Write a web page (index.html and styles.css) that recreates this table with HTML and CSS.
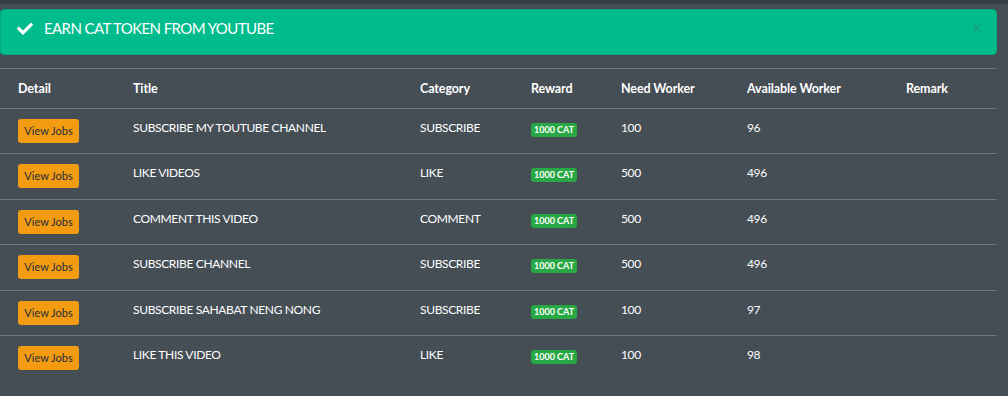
FILE: index.html
```html
<!DOCTYPE html>
<html lang="en">

<head>
    <meta charset="UTF-8">
    <meta name="viewport" content="width=device-width, initial-scale=1.0">
    <title>Earn CAT Token</title>
    <link rel="stylesheet" href="styles.css">
</head>

<body>
    <div class="topbar"></div>

    <div class="content">
        <!-- Alert -->
        <div class="alert">
            <svg class="alert-icon" width="16" height="13" viewBox="0 0 512 400">
                <path d="M173.9 391.4l-166.4-166.4c-10-10-10-26.2 0-36.2l36.2-36.2c10-10 26.2-10 36.2 0L192 264.7 432.1 24.6c10-10 26.2-10 36.2 0l36.2 36.2c10 10 10 26.2 0 36.2l-294.4 294.4c-10 10-26.2 10-36.2 0z" fill="#fff"/>
            </svg>
            <span class="alert-text">EARN CAT TOKEN FROM YOUTUBE</span>
            <span class="alert-close">&times;</span>
        </div>

        <!-- Jobs table -->
        <table class="jobs">
            <colgroup>
                <col style="width: 115px">
                <col style="width: 287px">
                <col style="width: 111px">
                <col style="width: 90px">
                <col style="width: 126px">
                <col style="width: 159px">
                <col style="width: 109px">
            </colgroup>
            <thead>
                <tr>
                    <th>Detail</th>
                    <th>Title</th>
                    <th>Category</th>
                    <th>Reward</th>
                    <th>Need Worker</th>
                    <th>Available Worker</th>
                    <th>Remark</th>
                </tr>
            </thead>
            <tbody>
                <tr>
                    <td><a href="#" class="btn-jobs">View Jobs</a></td>
                    <td>SUBSCRIBE MY TOUTUBE CHANNEL</td>
                    <td>SUBSCRIBE</td>
                    <td><span class="badge">1000 CAT</span></td>
                    <td>100</td>
                    <td>96</td>
                    <td></td>
                </tr>
                <tr>
                    <td><a href="#" class="btn-jobs">View Jobs</a></td>
                    <td>LIKE VIDEOS</td>
                    <td>LIKE</td>
                    <td><span class="badge">1000 CAT</span></td>
                    <td>500</td>
                    <td>496</td>
                    <td></td>
                </tr>
                <tr>
                    <td><a href="#" class="btn-jobs">View Jobs</a></td>
                    <td>COMMENT THIS VIDEO</td>
                    <td>COMMENT</td>
                    <td><span class="badge">1000 CAT</span></td>
                    <td>500</td>
                    <td>496</td>
                    <td></td>
                </tr>
                <tr>
                    <td><a href="#" class="btn-jobs">View Jobs</a></td>
                    <td>SUBSCRIBE CHANNEL</td>
                    <td>SUBSCRIBE</td>
                    <td><span class="badge">1000 CAT</span></td>
                    <td>500</td>
                    <td>496</td>
                    <td></td>
                </tr>
                <tr>
                    <td><a href="#" class="btn-jobs">View Jobs</a></td>
                    <td>SUBSCRIBE SAHABAT NENG NONG</td>
                    <td>SUBSCRIBE</td>
                    <td><span class="badge">1000 CAT</span></td>
                    <td>100</td>
                    <td>97</td>
                    <td></td>
                </tr>
                <tr>
                    <td><a href="#" class="btn-jobs">View Jobs</a></td>
                    <td>LIKE THIS VIDEO</td>
                    <td>LIKE</td>
                    <td><span class="badge">1000 CAT</span></td>
                    <td>100</td>
                    <td>98</td>
                    <td></td>
                </tr>
            </tbody>
        </table>
    </div>
</body>

</html>
```

FILE: styles.css
```css
body {
    font-family: 'Lato', 'Liberation Sans', sans-serif;
    background: #454d55;
    margin: 0;
    padding: 0;
    color: #fff;
}

.topbar {
    height: 4px;
    background: #383e44;
}

.content {
    width: 997px;
    padding-top: 5px;
}

.alert {
    display: flex;
    align-items: flex-start;
    height: 44px;
    box-sizing: border-box;
    height: 46px;
    padding: 8px 17px 0 16px;
    background: #00bc8c;
    border: 1px solid #00a87d;
    border-radius: 4px;
    line-height: 20px;
}

.alert-icon {
    margin-top: 4px;
    margin-right: 11px;
}

.alert-text {
    font-size: 15px;
    letter-spacing: -0.6px;
    flex: 1;
}

.alert-close {
    font-size: 18px;
    font-weight: 700;
    color: #17a27f;
    margin-right: -3px;
}

.jobs {
    width: 997px;
    margin-top: 13px;
    border-collapse: collapse;
    table-layout: fixed;
    font-size: 12px;
    line-height: 18px;
    letter-spacing: -0.35px;
}

.jobs th,
.jobs td {
    text-align: left;
    padding: 0 0 0 18px;
    border-top: 1px solid #6c757d;
}

.jobs th {
    height: 38px;
    font-size: 12.5px;
    font-weight: 700;
    letter-spacing: -0.1px;
    vertical-align: middle;
    padding-top: 1px;
}

.jobs td {
    height: 34.4px;
    padding-top: 10px;
    vertical-align: top;
}

.btn-jobs {
    display: inline-block;
    vertical-align: top;
    background: #f39c12;
    color: #1f2d3d;
    font-size: 11px;
    letter-spacing: 0;
    line-height: 24px;
    width: 61px;
    text-align: center;
    border-radius: 3px;
    text-decoration: none;
}

.badge {
    display: inline-block;
    vertical-align: top;
    margin-top: 4px;
    background: #28a745;
    color: #fff;
    font-size: 9px;
    font-weight: 700;
    letter-spacing: 0;
    line-height: 14px;
    padding: 0 3px;
    border-radius: 3px;
}
```
